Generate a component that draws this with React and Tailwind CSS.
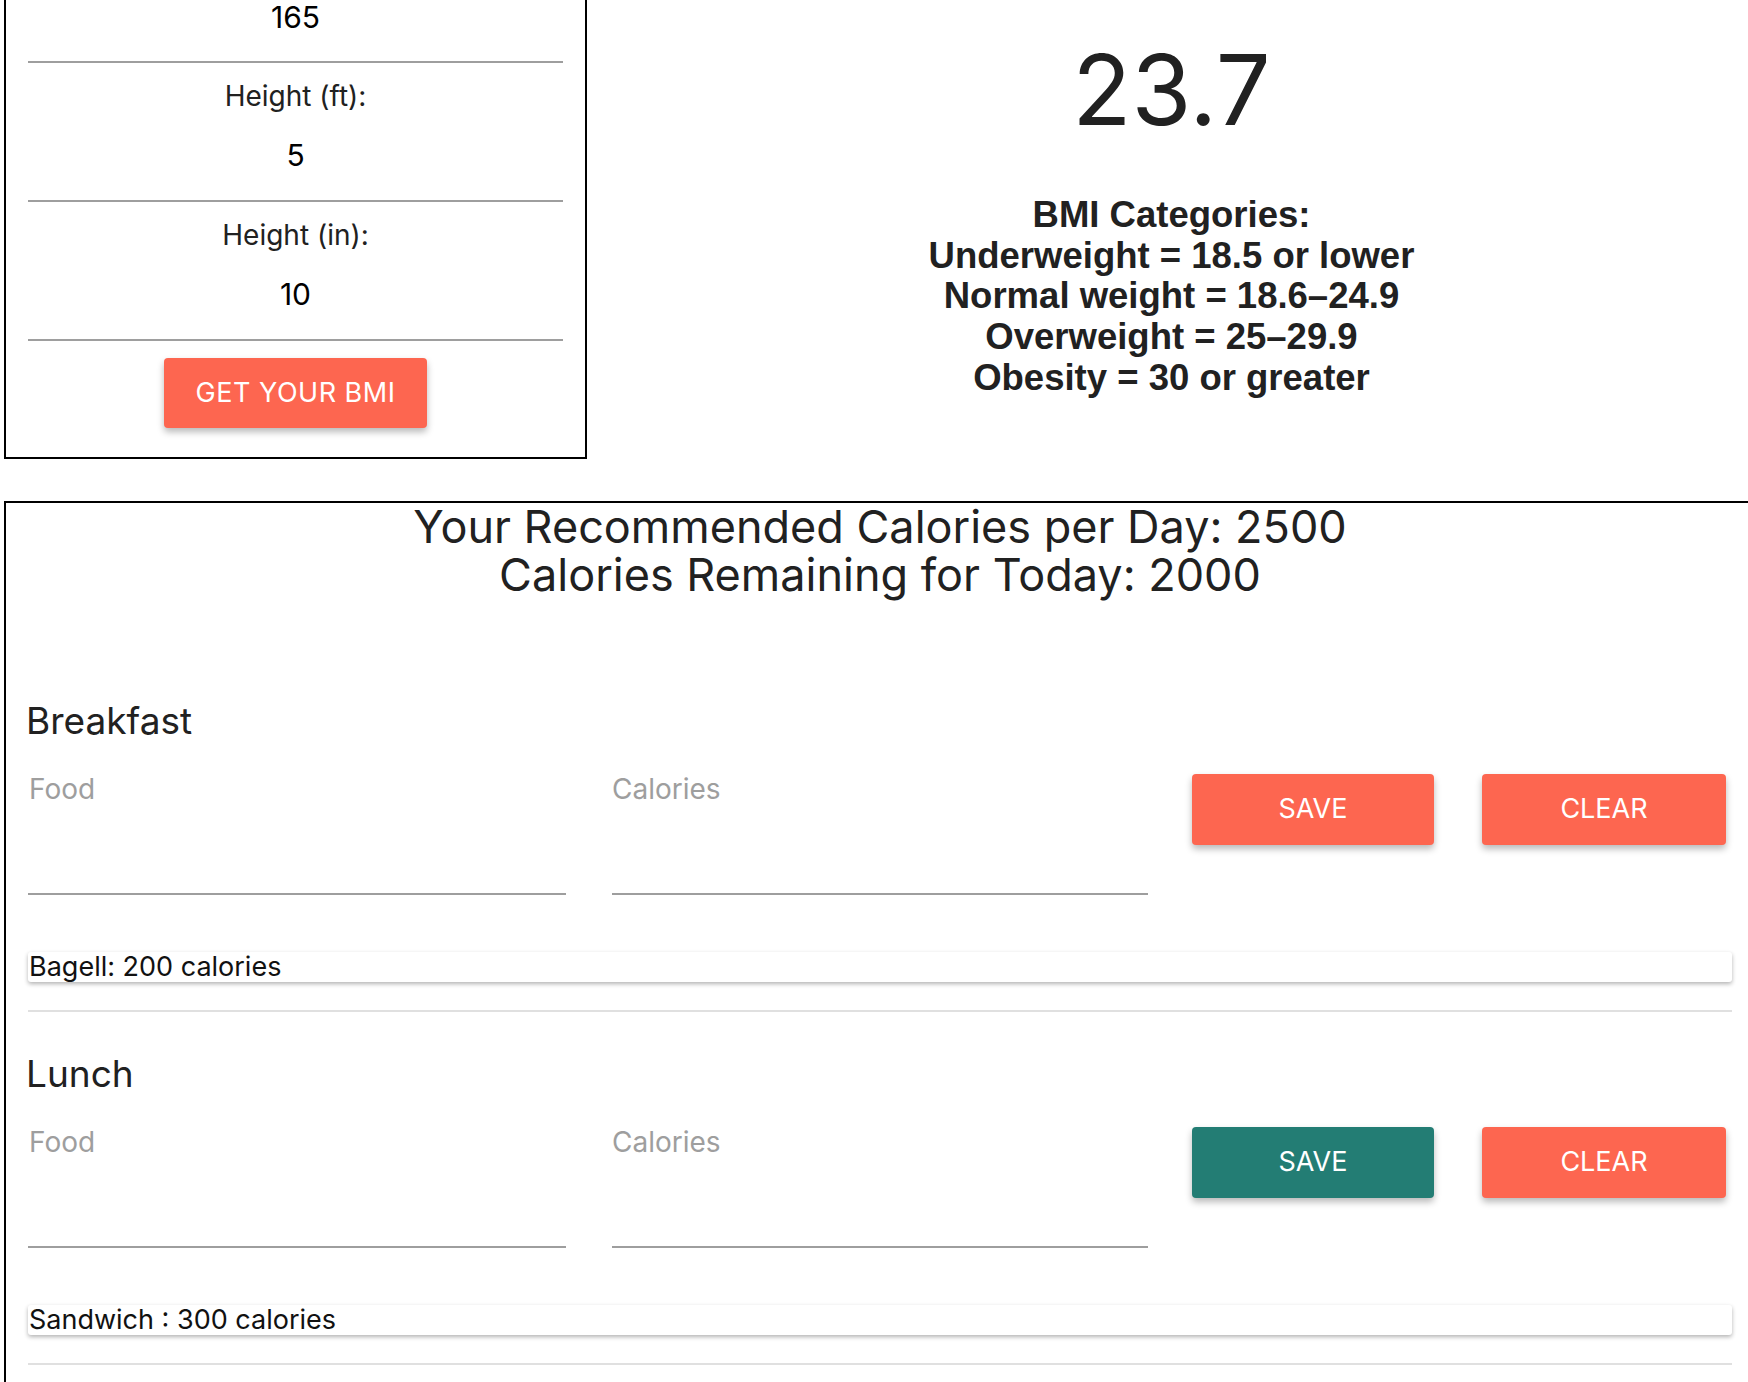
import React from "react";

const font = { fontFamily: "Inter, 'Noto Sans', sans-serif" };

const meals = [
  { name: "Breakfast", entry: "Bagell: 200 calories", saveTeal: false },
  { name: "Lunch", entry: "Sandwich : 300 calories", saveTeal: true },
];

const BmiField = ({ label, value }) => (
  <div className="text-center">
    <div className="mt-[13px] leading-[40px] text-[28px] text-[#212121]">{label}</div>
    <div className="mt-[19px] leading-[40px] text-[30px] text-black">{value}</div>
    <div className="mt-[25px] h-[2px] bg-[#9e9e9e]" />
  </div>
);

const MealSection = ({ meal }) => (
  <div className="pt-[39px]">
    <h2 className="h-[46px] leading-[46px] text-[37px] text-[#212121] -ml-[2px]">{meal.name}</h2>

    {/* inputs + buttons */}
    <div className="mt-[27px] flex items-start">
      <div className="w-[538px]">
        <div className="h-[36px] leading-[36px] text-[28px] text-[#9e9e9e] pl-[1px]">Food</div>
        <div className="h-[86px]" />
        <div className="h-[2px] bg-[#9e9e9e]" />
      </div>
      <div className="ml-[46px] w-[536px]">
        <div className="h-[36px] leading-[36px] text-[28px] text-[#9e9e9e]">Calories</div>
        <div className="h-[86px]" />
        <div className="h-[2px] bg-[#9e9e9e]" />
      </div>
      <button
        className={`ml-[44px] mt-[3px] h-[71px] w-[242px] rounded-[4px] text-[27px] text-white shadow-[0_4px_7px_rgba(0,0,0,0.28)] ${
          meal.saveTeal ? "bg-[#237d74]" : "bg-[#fd6650]"
        }`}
      >
        SAVE
      </button>
      <button className="ml-[48px] mt-[3px] h-[71px] w-[244px] rounded-[4px] bg-[#fd6650] text-[27px] text-white shadow-[0_4px_7px_rgba(0,0,0,0.28)]">
        CLEAR
      </button>
    </div>

    {/* saved entry */}
    <div className="mt-[57px] h-[30px] rounded-[3px] bg-white shadow-[0_2px_4px_rgba(0,0,0,0.3)] pl-[1px] leading-[30px] text-[27px] text-[#111]">
      {meal.entry}
    </div>
    <div className="mt-[28px] h-[2px] bg-[#e0e0e0]" />
  </div>
);

const App = () => {
  return (
    <div className="w-[1748px] h-[1382px] overflow-hidden bg-white" style={font}>
      {/* Top row: BMI form + result */}
      <div className="flex items-start">
        <div className="ml-[4px] w-[583px] border-x-2 border-b-2 border-black px-[22px] pb-[29px]">
          <div className="text-center">
            <div className="h-[34px] leading-[34px] text-[30px] text-black">165</div>
            <div className="mt-[27px] h-[2px] bg-[#9e9e9e]" />
          </div>
          <BmiField label="Height (ft):" value="5" />
          <BmiField label="Height (in):" value="10" />
          <div className="mt-[17px] flex justify-center">
            <button className="h-[70px] w-[263px] rounded-[4px] bg-[#fd6650] text-[27px] tracking-[0.5px] text-white shadow-[0_4px_7px_rgba(0,0,0,0.28)]">
              GET YOUR BMI
            </button>
          </div>
        </div>

        <div className="flex-1 pl-[8px] text-center text-[#212121]">
          <div className="mt-[35px] leading-[110px] text-[97px]">23.7</div>
          <div
            className="mt-[50px] text-[36.5px] font-bold leading-[40.7px]"
            style={{ fontFamily: "'Liberation Sans', Arial, sans-serif" }}
          >
            <div>BMI Categories:</div>
            <div>Underweight = 18.5 or lower</div>
            <div>Normal weight = 18.6–24.9</div>
            <div>Overweight = 25–29.9</div>
            <div>Obesity = 30 or greater</div>
          </div>
        </div>
      </div>

      {/* Calorie tracker */}
      <div className="mt-[42px] ml-[4px] w-[1752px] border-2 border-black px-[22px] pb-[40px]">
        <div className="text-center text-[45px] leading-[48px] text-[#212121]">
          <div>Your Recommended Calories per Day: 2500</div>
          <div>Calories Remaining for Today: 2000</div>
        </div>
        <div className="h-[60px]" />
        {meals.map((meal, index) => (
          <MealSection key={index} meal={meal} />
        ))}
      </div>
    </div>
  );
};

export default App;
